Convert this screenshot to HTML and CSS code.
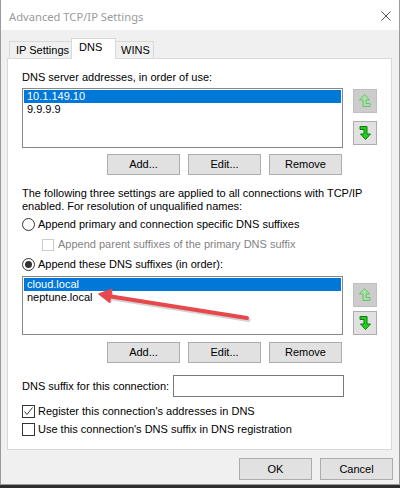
FILE: index.html
```html
<!DOCTYPE html>
<html>
<head>
<meta charset="utf-8">
<link rel="stylesheet" href="styles.css">
</head>
<body>
<div class="window">
  <div class="titlebar">
    <span class="title">Advanced TCP/IP Settings</span>
    <svg class="close" width="10" height="10" viewBox="0 0 10 10"><path d="M0.5 0.5L9.5 9.5M9.5 0.5L0.5 9.5" stroke="#555" stroke-width="1" fill="none"/></svg>
  </div>
  <div class="body">
    <div class="tabs">
      <div class="tab t-ip">IP Settings</div>
      <div class="tab t-dns active">DNS</div>
      <div class="tab t-wins">WINS</div>
    </div>
    <div class="panel">
      <div class="label l1">DNS server addresses, in order of use:</div>
      <div class="listrow r1">
        <div class="list list-a">
          <div class="item sel">10.1.149.10</div>
          <div class="item">9.9.9.9</div>
        </div>
        <div class="arrows arrows-a">
          <div class="abtn dis">
            <svg width="24" height="24" viewBox="0 0 24 24"><path d="M11.5 5.5L16.5 11H13V14.5H17V17.5H10V11H6.5Z" fill="#a6e3a6" stroke="#6cbf6c" stroke-width="1" stroke-linejoin="miter"/></svg>
          </div>
          <div class="abtn">
            <svg width="24" height="24" viewBox="0 0 24 24"><path d="M7 5.5H14V13H17.5L12.5 18.5L7.5 13H11V8.5H7Z" fill="#1fd11f" stroke="#0b7d0b" stroke-width="1" stroke-linejoin="miter"/></svg>
          </div>
        </div>
      </div>
      <div class="btnrow br1">
        <div class="btn">Add...</div>
        <div class="btn">Edit...</div>
        <div class="btn">Remove</div>
      </div>
      <p class="para">The following three settings are applied to all connections with TCP/IP<br>enabled. For resolution of unqualified names:</p>
      <div class="opt o1"><span class="radio"></span><span>Append primary and connection specific DNS suffixes</span></div>
      <div class="opt o2 disabled"><span class="check dis"></span><span>Append parent suffixes of the primary DNS suffix</span></div>
      <div class="opt o3"><span class="radio on"></span><span>Append these DNS suffixes (in order):</span></div>
      <div class="listrow r2">
        <div class="list list-b">
          <div class="item sel">cloud.local</div>
          <div class="item">neptune.local</div>
        </div>
        <div class="arrows arrows-b">
          <div class="abtn dis">
            <svg width="24" height="24" viewBox="0 0 24 24"><path d="M11.5 5.5L16.5 11H13V14.5H17V17.5H10V11H6.5Z" fill="#a6e3a6" stroke="#6cbf6c" stroke-width="1" stroke-linejoin="miter"/></svg>
          </div>
          <div class="abtn">
            <svg width="24" height="24" viewBox="0 0 24 24"><path d="M7 5.5H14V13H17.5L12.5 18.5L7.5 13H11V8.5H7Z" fill="#1fd11f" stroke="#0b7d0b" stroke-width="1" stroke-linejoin="miter"/></svg>
          </div>
        </div>
      </div>
      <div class="btnrow br2">
        <div class="btn">Add...</div>
        <div class="btn">Edit...</div>
        <div class="btn">Remove</div>
      </div>
      <div class="suffix">
        <span class="suffix-label">DNS suffix for this connection:</span>
        <div class="input"></div>
      </div>
      <div class="opt c1"><span class="check"><svg width="11" height="11" viewBox="0 0 11 11"><path d="M1.5 5.5L4 8.5L9.5 1.5" stroke="#333" stroke-width="1" fill="none"/></svg></span><span>Register this connection's addresses in DNS</span></div>
      <div class="opt c2"><span class="check"></span><span>Use this connection's DNS suffix in DNS registration</span></div>
    </div>
    <div class="footer">
      <div class="btn">OK</div>
      <div class="btn">Cancel</div>
    </div>
  </div>
</div>
<svg class="annot" width="400" height="488" viewBox="0 0 400 488">
  <g opacity="0.25" transform="translate(1.5,2)">
    <line x1="247" y1="318" x2="108" y2="296" stroke="#555" stroke-width="4" stroke-linecap="round"/>
    <polygon points="99,294 111.8,290 109.8,301.8" fill="#555"/>
  </g>
  <line x1="247" y1="318" x2="108" y2="296" stroke="#e8484c" stroke-width="4" stroke-linecap="round"/>
  <polygon points="99,294 111.8,289.5 109.6,302.2" fill="#e8484c" stroke="#e8484c" stroke-width="1.5" stroke-linejoin="round"/>
</svg>
</body>
</html>
```
FILE: styles.css
```css
html, body {
  margin: 0;
  padding: 0;
  background: #2e2e2e;
  width: 400px;
  height: 488px;
  overflow: hidden;
}
body {
  position: relative;
  font-family: "Liberation Sans", Arial, sans-serif;
  font-size: 11px;
  color: #000;
}
.window {
  width: 400px;
  height: 485px;
  box-sizing: border-box;
  border-left: 1px solid #9a9a9a;
  border-right: 1px solid #9a9a9a;
  border-bottom: 1px solid #9a9a9a;
  background: #f0f0f0;
  display: flex;
  flex-direction: column;
}
.titlebar {
  height: 30px;
  flex: none;
  background: #fff;
  display: flex;
  align-items: center;
  justify-content: space-between;
  padding: 0 8px 0 8px;
}
.title {
  font-family: "Noto Sans", "Open Sans", sans-serif;
  font-size: 11.2px;
  color: #9a9a9a;
  margin-top: 2px;
}
.close { display: block; margin-top: 2px; }
.body {
  flex: 1;
  display: flex;
  flex-direction: column;
}
.tabs {
  display: flex;
  align-items: flex-end;
  height: 20px;
  margin-top: 8px;
  margin-left: 8px;
  position: relative;
  z-index: 2;
}
.tab {
  box-sizing: border-box;
  height: 17px;
  border: 1px solid #d9d9d9;
  border-bottom: none;
  background: #f0f0f0;
  padding-left: 6px;
  line-height: 17px;
  white-space: nowrap;
}
.t-ip { width: 63px; }
.t-dns {
  width: 45px;
  margin-left: -1px;
  height: 21px;
  background: #fff;
  padding-left: 7px;
  line-height: 17px;
  margin-bottom: -1px;
}
.t-wins { width: 39px; margin-left: -1px; padding-left: 5px; }
.panel {
  box-sizing: border-box;
  margin-left: 6px;
  width: 385px;
  height: 392px;
  background: #fff;
  border: 1px solid #d9d9d9;
  padding: 0 0 0 14px;
  display: flex;
  flex-direction: column;
}
.label { height: 13px; line-height: 13px; }
.l1 { margin-top: 12px; }
.listrow { display: flex; }
.r1 { margin-top: 4px; }
.r2 { margin-top: 5px; }
.list {
  box-sizing: border-box;
  width: 321px;
  border: 1px solid #828790;
  background: #fff;
  padding: 1px;
}
.list-a { height: 60px; }
.list-b { height: 59px; }
.item {
  height: 13px;
  line-height: 13px;
  padding-left: 3px;
  white-space: nowrap;
}
.item.sel { background: #0078d7; color: #fff; }
.arrows {
  margin-left: 10px;
  display: flex;
  flex-direction: column;
}
.arrows-a { padding-top: 1px; gap: 8px; }
.arrows-b { padding-top: 7px; gap: 4px; }
.abtn {
  box-sizing: border-box;
  width: 24px;
  height: 24px;
  background: #e1e1e1;
  border: 1px solid #adadad;
  position: relative;
}
.abtn svg { display: block; margin: -1px; }
.abtn.dis { background: #cccccc; border-color: #bfbfbf; }
.btnrow {
  display: flex;
  gap: 8px;
  margin-left: 85px;
}
.br1 { margin-top: 6px; }
.br2 { margin-top: 7px; }
.btn {
  box-sizing: border-box;
  width: 73px;
  height: 21px;
  background: #e1e1e1;
  border: 1px solid #adadad;
  text-align: center;
  line-height: 19px;
}
.para {
  margin: 12px 0 0 0;
  line-height: 13px;
}
.opt {
  display: flex;
  align-items: center;
  height: 13px;
  line-height: 13px;
  white-space: nowrap;
}
.o1 { margin-top: 5px; }
.o2 { margin-top: 7px; padding-left: 20px; color: #838383; }
.o3 { margin-top: 7px; }
.radio {
  box-sizing: border-box;
  width: 13px;
  height: 13px;
  border: 1px solid #333;
  border-radius: 50%;
  margin-right: 3px;
  display: flex;
  align-items: center;
  justify-content: center;
  flex: none;
}
.radio.on::after {
  content: "";
  width: 7px;
  height: 7px;
  border-radius: 50%;
  background: #333;
}
.check {
  box-sizing: border-box;
  width: 13px;
  height: 13px;
  border: 1px solid #333;
  background: #fff;
  margin-right: 3px;
  flex: none;
}
.check svg { display: block; margin: 0; }
.check.dis { border-color: #cccccc; width: 12px; height: 12px; margin-right: 4px; }
.suffix {
  display: flex;
  align-items: center;
  margin-top: 12px;
  height: 22px;
}
.suffix-label { width: 151px; }
.input {
  box-sizing: border-box;
  width: 171px;
  height: 22px;
  border: 1px solid #7a7a7a;
  background: #fff;
}
.c1 { margin-top: 8px; }
.c2 { margin-top: 5px; }
.footer {
  display: flex;
  justify-content: flex-end;
  gap: 8px;
  margin-top: 8px;
  padding-right: 6px;
}
.footer .btn { height: 22px; line-height: 20px; }
.annot {
  position: absolute;
  left: 0;
  top: 0;
  pointer-events: none;
}
```
